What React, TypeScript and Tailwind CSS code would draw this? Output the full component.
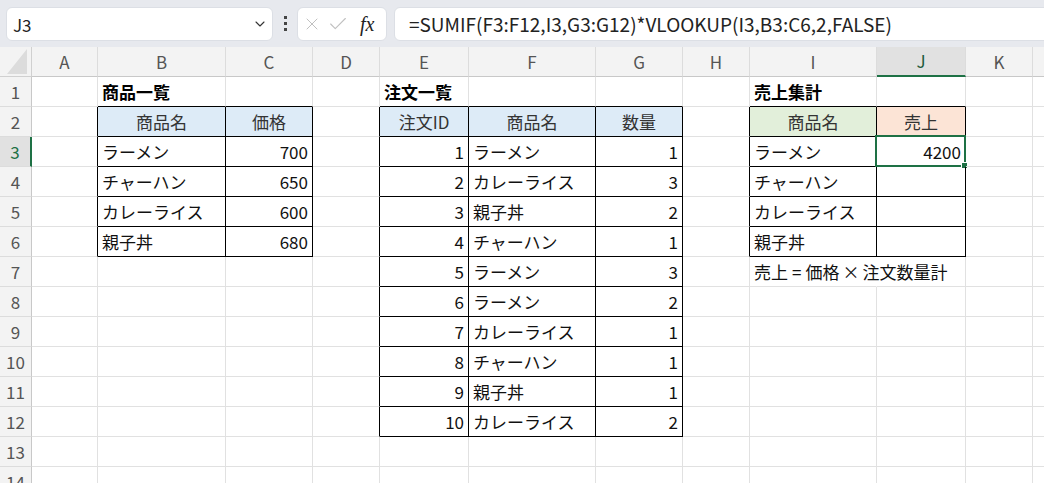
import React from 'react';
import { ChevronDown, X, Check } from 'lucide-react';

type Cell = { t: string; a?: 'l' | 'r' | 'c'; b?: boolean; fill?: 'blue' | 'green' | 'orange' };

const COLS = ['A', 'B', 'C', 'D', 'E', 'F', 'G', 'H', 'I', 'J', 'K', 'L'];
const ROWS = Array.from({ length: 14 }, (_, i) => i + 1);

const products = ['ラーメン', 'チャーハン', 'カレーライス', '親子丼'];
const prices = ['700', '650', '600', '680'];
const orderItems = ['ラーメン', 'カレーライス', '親子丼', 'チャーハン', 'ラーメン', 'ラーメン', 'カレーライス', 'チャーハン', '親子丼', 'カレーライス'];
const orderQty = ['1', '3', '2', '1', '3', '2', '1', '1', '1', '2'];

const cells: Record<string, Cell> = {
  B1: { t: '商品一覧', b: true },
  E1: { t: '注文一覧', b: true },
  I1: { t: '売上集計', b: true },
  B2: { t: '商品名', a: 'c', fill: 'blue' },
  C2: { t: '価格', a: 'c', fill: 'blue' },
  E2: { t: '注文ID', a: 'c', fill: 'blue' },
  F2: { t: '商品名', a: 'c', fill: 'blue' },
  G2: { t: '数量', a: 'c', fill: 'blue' },
  I2: { t: '商品名', a: 'c', fill: 'green' },
  J2: { t: '売上', a: 'c', fill: 'orange' },
  J3: { t: '4200', a: 'r' },
};
products.forEach((p, i) => {
  cells[`B${i + 3}`] = { t: p };
  cells[`C${i + 3}`] = { t: prices[i], a: 'r' };
  cells[`I${i + 3}`] = { t: p };
});
orderItems.forEach((p, i) => {
  cells[`E${i + 3}`] = { t: String(i + 1), a: 'r' };
  cells[`F${i + 3}`] = { t: p };
  cells[`G${i + 3}`] = { t: orderQty[i], a: 'r' };
});

// bordered ranges: [firstCol, firstRow, lastCol, lastRow], column A = 0
const boxes = [
  [1, 2, 2, 6],
  [4, 2, 6, 12],
  [8, 2, 9, 6],
];
const inBox = (c: number, r: number) =>
  boxes.some(([c1, r1, c2, r2]) => c >= c1 && c <= c2 && r >= r1 && r <= r2);

const fills = {
  blue: 'bg-[#ddebf7]',
  green: 'bg-[#e2efda]',
  orange: 'bg-[#fce4d6]',
};

const gridCols =
  'grid grid-cols-[32px_66px_128px_87px_67px_89px_127px_87px_67px_127px_89px_67px_67px]';

// note under the sales table, spills over into J7
const SalesNote = () => (
  <span className="text-[17px] leading-none text-[#111]">
    売上<span className="px-[4px]">=</span>価格<span className="px-[3px]">×</span>注文数量計
  </span>
);

const SheetCell: React.FC<{ c: number; r: number }> = ({ c, r }) => {
  const id = `${COLS[c]}${r}`;
  const cell = cells[id];
  const rightBlack = inBox(c, r) || inBox(c + 1, r);
  const bottomBlack = inBox(c, r) || inBox(c, r + 1);
  const overflowText = id === 'I7';
  const align =
    cell?.a === 'r' ? 'justify-end pr-[4px]' : cell?.a === 'c' ? 'justify-center' : 'justify-start pl-[4px]';

  return (
    <div
      className={`relative flex items-center border-r border-b whitespace-nowrap ${align} ${
        rightBlack ? 'border-r-black' : overflowText ? 'border-r-transparent' : 'border-r-[#e1e1e1]'
      } ${bottomBlack ? 'border-b-black' : 'border-b-[#e1e1e1]'} ${cell?.fill ? fills[cell.fill] : ''} ${
        overflowText ? 'z-10 overflow-visible' : ''
      }`}
    >
      {cell && (
        <span className={`text-[17px] leading-none ${cell.b ? 'font-bold text-black' : 'text-[#111]'} ${cell.fill ? 'text-[#333]' : ''}`}>
          {cell.t}
        </span>
      )}
      {overflowText && <SalesNote />}
      {id === 'J3' && (
        <div className="absolute -left-[2px] -top-[2px] -right-[1px] -bottom-[1px] border-2 border-[#1e7145]">
          <div className="absolute -right-[4px] -bottom-[4px] w-[7px] h-[7px] bg-[#1e7145] border border-white" />
        </div>
      )}
    </div>
  );
};

const App: React.FC = () => {
  return (
    <div className="w-[1044px] h-[483px] overflow-hidden bg-white font-['Noto_Sans_CJK_JP','Noto_Sans',sans-serif] text-black">
      {/* name box + formula bar */}
      <div className="h-[47px] bg-[#e7e9ee] flex items-center pl-[6px] overflow-hidden">
        <div className="w-[267px] shrink-0 h-[34px] bg-white rounded-md border border-[#dcdfe5] flex items-center justify-between pl-[6px] pr-[4px]">
          <span className="text-[17px] text-[#222] pt-[3px]">J3</span>
          <ChevronDown className="w-[16px] h-[16px] text-[#333]" strokeWidth={1.6} />
        </div>
        <div className="shrink-0 flex flex-col gap-[3px] ml-[11px] mr-[10px]">
          <span className="w-[3px] h-[3px] bg-[#444]" />
          <span className="w-[3px] h-[3px] bg-[#444]" />
          <span className="w-[3px] h-[3px] bg-[#444]" />
        </div>
        <div className="w-[90px] shrink-0 h-[34px] bg-white rounded-md border border-[#dcdfe5] flex items-center pl-[4px] gap-[5px]">
          <X className="w-[20px] h-[20px] text-[#c0c0c0]" strokeWidth={1.2} />
          <Check className="w-[22px] h-[22px] text-[#c0c0c0]" strokeWidth={1.2} />
          <span className="ml-[6px] font-['Liberation_Serif',serif] italic text-[20px] text-[#222] leading-none">fx</span>
        </div>
        <div className="w-[700px] shrink-0 ml-[7px] h-[34px] bg-white rounded-md border border-[#dcdfe5] flex items-center pl-[14px]">
          <span className="text-[19px] text-[#222] leading-none">=SUMIF(F3:F12,I3,G3:G12)*VLOOKUP(I3,B3:C6,2,FALSE)</span>
        </div>
      </div>

      {/* column letters; L sits past the window edge */}
      <div className={`${gridCols} h-[30px] bg-[#f3f3f3]`}>
        <div className="relative border-r border-b border-[#d0d0d0]">
          <svg className="absolute left-[7px] top-[2px]" width="20" height="25" viewBox="0 0 20 25">
            <polygon points="20,0 20,25 0,25" fill="#dcdcdc" />
          </svg>
        </div>
        {COLS.map((col) => (
          <div
            key={col}
            className={`flex items-center justify-center text-[17px] border-r border-r-[#dcdcdc] ${
              col === 'J'
                ? 'bg-[#e1e1e1] border-b-2 border-b-[#1e7145] text-[#1e5a3a]'
                : 'border-b border-b-[#c8c8c8] text-[#555]'
            }`}
          >
            {col === 'L' ? '' : col}
          </div>
        ))}
      </div>

      {/* sheet body */}
      {ROWS.map((r) => (
        <div key={r} className={`${gridCols} h-[30px]`}>
          <div
            className={`flex items-center justify-center text-[17px] border-b border-b-[#dcdcdc] ${
              r === 3
                ? 'bg-[#e1e1e1] text-[#1e7145] border-r-2 border-r-[#1e7145]'
                : 'bg-[#f3f3f3] text-[#555] border-r border-r-[#c8c8c8]'
            }`}
          >
            {r}
          </div>
          {COLS.map((_, c) => (
            <SheetCell key={c} c={c} r={r} />
          ))}
        </div>
      ))}
    </div>
  );
};

export default App;
